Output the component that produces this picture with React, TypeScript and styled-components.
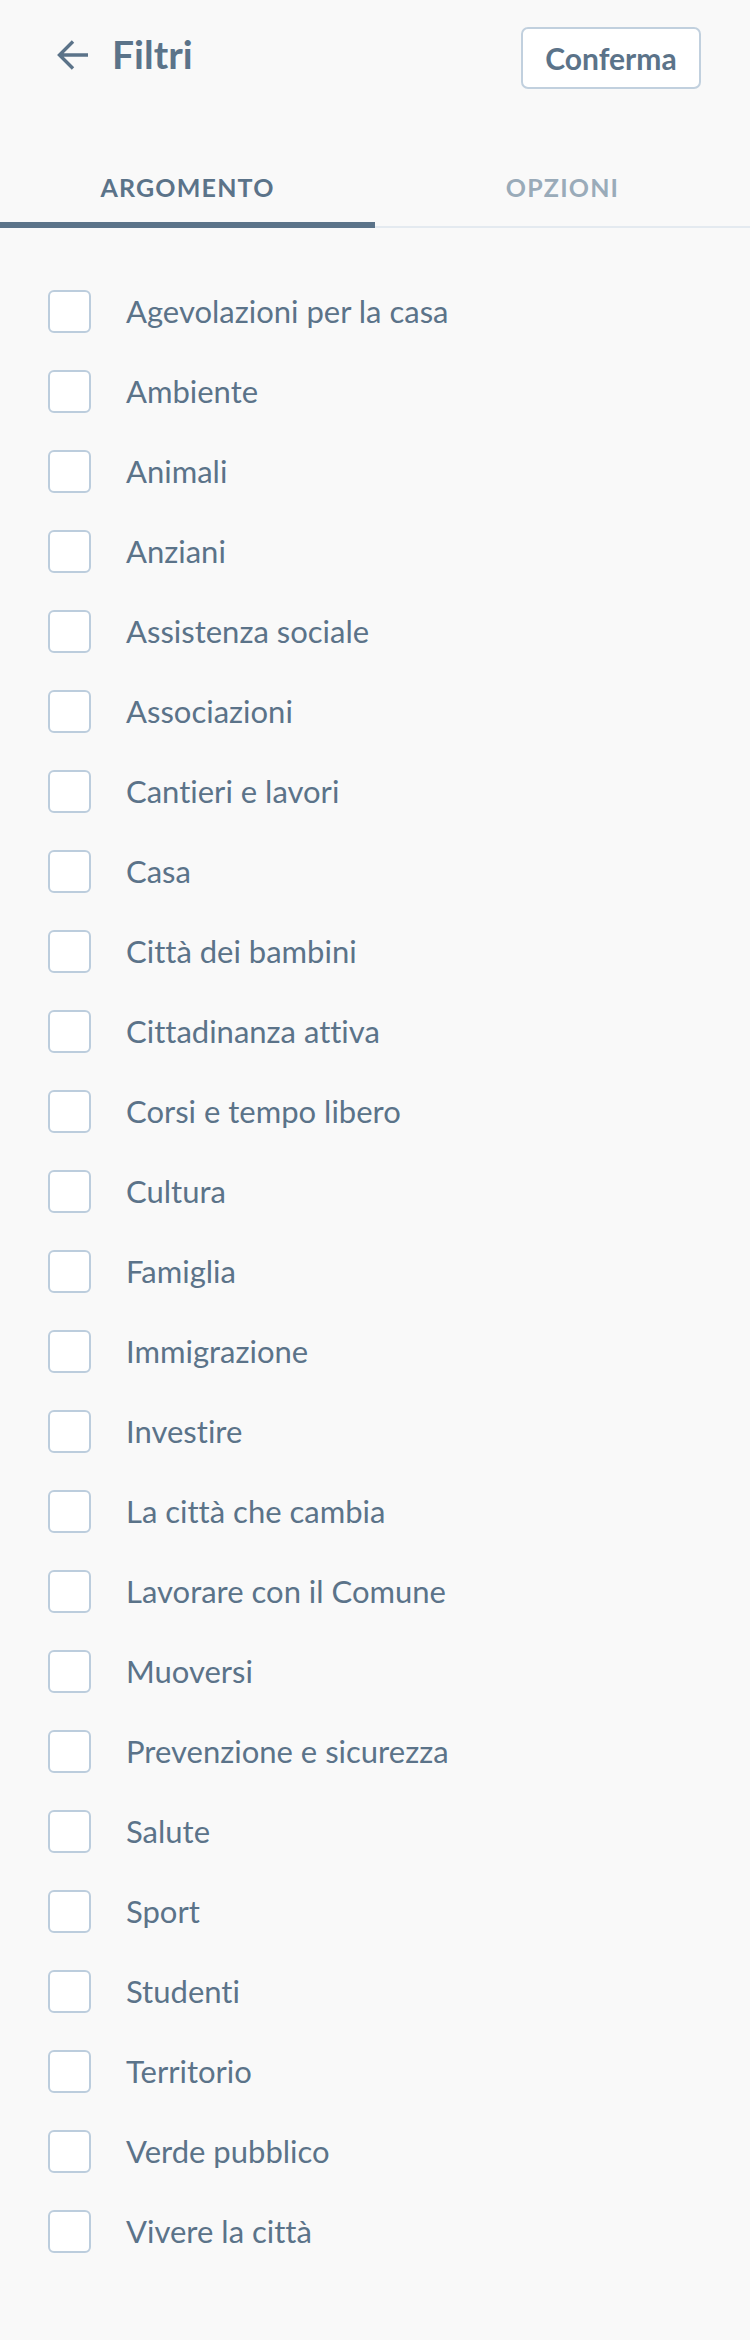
import styled, { createGlobalStyle } from "styled-components";

const GlobalStyle = createGlobalStyle`
  html, body {
    margin: 0;
    padding: 0;
    background: #f9f9f9;
  }
  body {
    font-family: Lato, "Liberation Sans", sans-serif;
    font-variant-ligatures: none;
    color: #5b7389;
  }
  button {
    font-variant-ligatures: none;
  }
`;

const topics = [
  "Agevolazioni per la casa",
  "Ambiente",
  "Animali",
  "Anziani",
  "Assistenza sociale",
  "Associazioni",
  "Cantieri e lavori",
  "Casa",
  "Città dei bambini",
  "Cittadinanza attiva",
  "Corsi e tempo libero",
  "Cultura",
  "Famiglia",
  "Immigrazione",
  "Investire",
  "La città che cambia",
  "Lavorare con il Comune",
  "Muoversi",
  "Prevenzione e sicurezza",
  "Salute",
  "Sport",
  "Studenti",
  "Territorio",
  "Verde pubblico",
  "Vivere la città",
];

const Page = styled.div`
  width: 750px;
  min-height: 2340px;
  background: #f9f9f9;
`;

const Header = styled.header`
  display: flex;
  align-items: center;
  justify-content: space-between;
  padding: 27px 49px 0 56px;
`;

const BackGroup = styled.div`
  display: flex;
  align-items: center;
  gap: 22px;
  padding-bottom: 7px;
`;

const Title = styled.h1`
  margin: 0;
  font-size: 39px;
  font-weight: 700;
  line-height: 1;
  color: #5b7389;
`;

const ConfirmButton = styled.button`
  width: 180px;
  height: 62px;
  background: #ffffff;
  border: 2px solid #c1d0de;
  border-radius: 7px;
  font-family: Lato, "Liberation Sans", sans-serif;
  font-size: 30px;
  font-weight: 700;
  color: #5b7389;
  padding: 0;
`;

const Tabs = styled.nav`
  display: flex;
  margin-top: 59px;
`;

const Tab = styled.div<{ $active?: boolean }>`
  flex: 1;
  text-align: center;
  font-size: 25px;
  font-weight: 700;
  letter-spacing: 1.2px;
  line-height: 30px;
  padding: 24px 0 ${(p) => (p.$active ? "20px" : "24px")};
  color: ${(p) => (p.$active ? "#5b7389" : "#9aabb9")};
  border-bottom: ${(p) =>
    p.$active ? "6px solid #5b7389" : "2px solid #e4eaf0"};
`;

const List = styled.ul`
  list-style: none;
  margin: 0;
  padding: 43px 0 0;
`;

const Row = styled.li`
  display: flex;
  align-items: center;
  gap: 35px;
  height: 80px;
  padding-left: 48px;
`;

const Box = styled.span`
  box-sizing: border-box;
  width: 43px;
  height: 43px;
  border: 2px solid #bccddd;
  border-radius: 6px;
  background: #ffffff;
  flex-shrink: 0;
`;

const Label = styled.span`
  font-size: 31px;
  font-weight: 400;
  color: #5b7389;
  line-height: 1;
`;

function BackArrow() {
  return (
    <svg width="34" height="32" viewBox="0 0 34 32" fill="none">
      <path
        d="M32 16H4M17 2.5L3.5 16L17 29.5"
        stroke="#5b7389"
        strokeWidth="3.4"
        strokeLinecap="butt"
        strokeLinejoin="miter"
      />
    </svg>
  );
}

export default function App() {
  return (
    <Page>
      <GlobalStyle />
      <Header>
        <BackGroup>
          <BackArrow />
          <Title>Filtri</Title>
        </BackGroup>
        <ConfirmButton>Conferma</ConfirmButton>
      </Header>
      <Tabs>
        <Tab $active>ARGOMENTO</Tab>
        <Tab>OPZIONI</Tab>
      </Tabs>
      <List>
        {topics.map((t) => (
          <Row key={t}>
            <Box />
            <Label>{t}</Label>
          </Row>
        ))}
      </List>
    </Page>
  );
}
